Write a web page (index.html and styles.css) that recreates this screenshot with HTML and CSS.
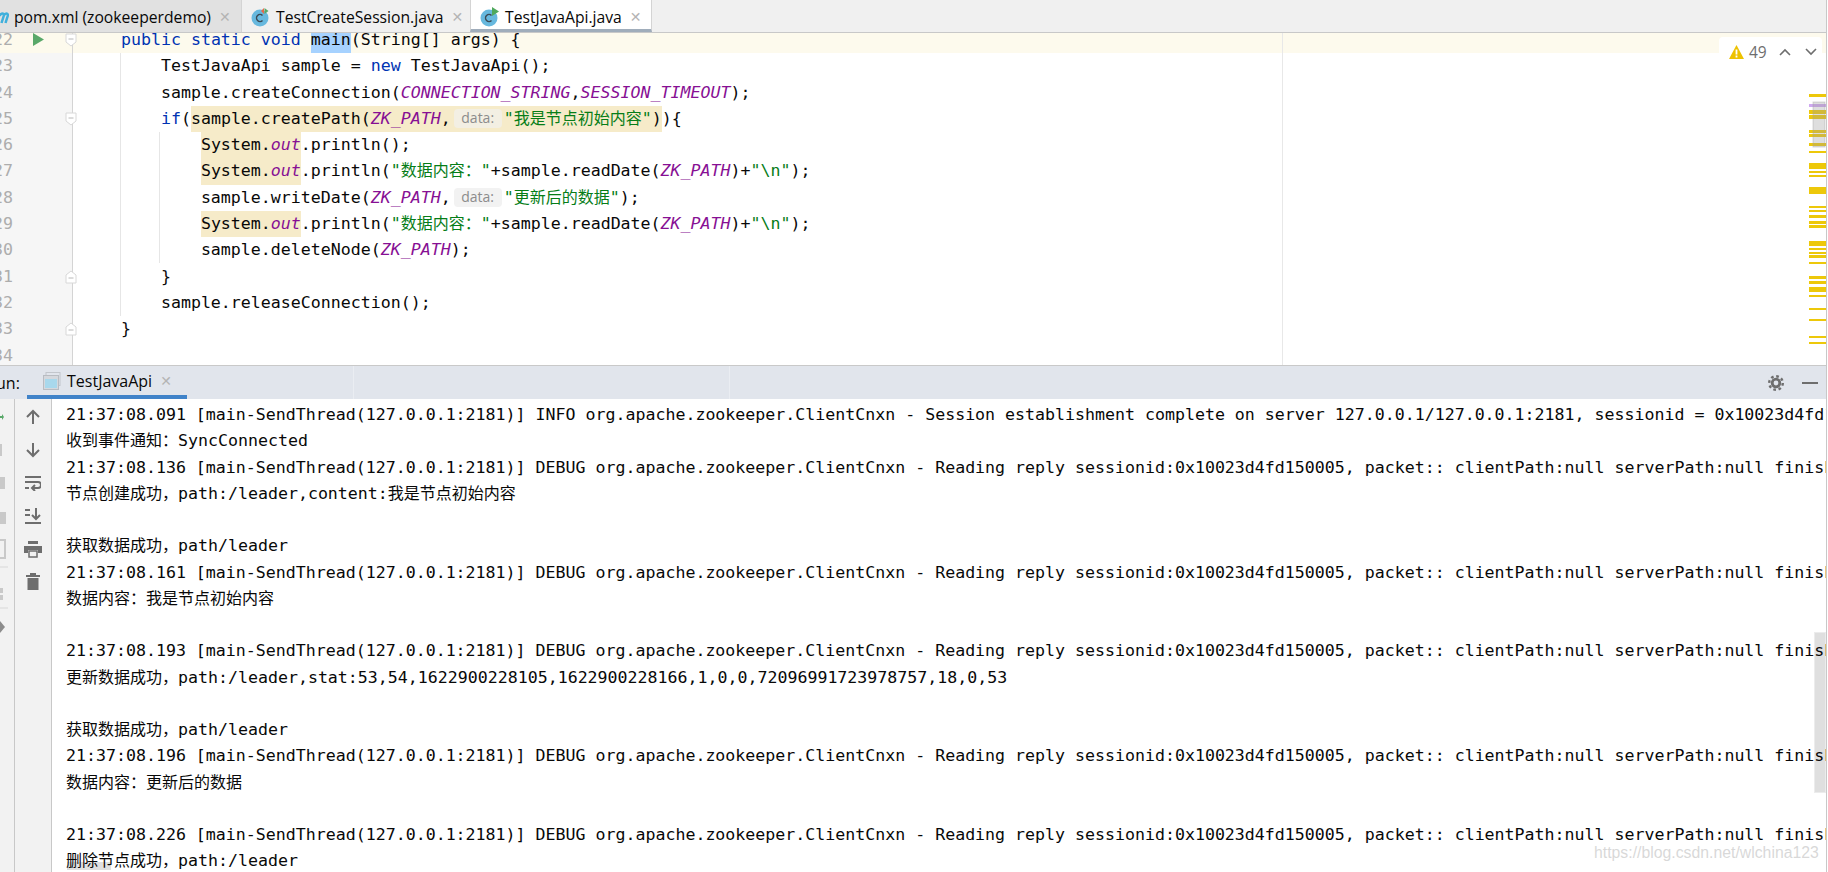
FILE: index.html
```html
<!DOCTYPE html>
<html lang="en">
<head>
    <meta charset="UTF-8">
    <meta name="viewport" content="width=device-width, initial-scale=1.0">
    <title>TestJavaApi.java</title>
    <link rel="stylesheet" href="styles.css">
</head>
<body>
<div class="ide">
    <div class="tabs">
        <div class="tab tab-pom">
            <svg class="tab-icon-m" width="9" height="16" viewBox="0 0 9 16"><path d="M-3 14 L0 4 M0 6 Q3 3 4 6 L1.500 14 M4 6 Q7 3 8 6 L5.500 14" fill="none" stroke="#3fb0dc" stroke-width="2.500"/></svg>
            <span class="tab-name">pom.xml (zookeeperdemo)</span>
            <span class="tab-close">✕</span>
        </div>
        <div class="tab tab-session">
            <svg class="tab-icon" width="20" height="20" viewBox="0 0 20 20"><circle cx="9" cy="11" r="8.500" fill="#67b8de"/><path d="M11.500 8.500a3.500 3.500 0 1 0 0 5" fill="none" stroke="#3c4a55" stroke-width="1.500"/><path d="M13 1v6l-3-3z" fill="#e8684a"/><path d="M13.500 1l4 3-4 3z" fill="#59a869"/></svg>
            <span class="tab-name">TestCreateSession.java</span>
            <span class="tab-close">✕</span>
        </div>
        <div class="tab tab-active">
            <svg class="tab-icon" width="20" height="20" viewBox="0 0 20 20"><circle cx="9" cy="11" r="8.500" fill="#67b8de"/><path d="M11.500 8.500a3.500 3.500 0 1 0 0 5" fill="none" stroke="#3c4a55" stroke-width="1.500"/><path d="M12 0l7 4.500-7 4.500z" fill="#4fa85c"/></svg>
            <span class="tab-name">TestJavaApi.java</span>
            <span class="tab-close">✕</span>
        </div>
    </div>

    <div class="editor">
        <div class="lines">
            <div class="line current">
                <div class="gutter"><span class="num"><span>22</span></span>
                    <svg class="run-arrow" width="11" height="13" viewBox="0 0 11 13"><path d="M0 0l11 6.500-11 6.500z" fill="#59a869"/></svg>
                    <svg class="fold" width="12" height="14" viewBox="0 0 12 14"><path d="M1 1h10v8l-5 4-5-4z" fill="#fff" stroke="#d8d8d8"/><path d="M3.500 6h5" stroke="#b8b8b8"/></svg>
                </div>
                <div class="code">    <span class="kw">public static void</span> <span class="sel">main</span>(String[] args) {</div>
            </div>
            <div class="line">
                <div class="gutter"><span class="num"><span>23</span></span></div>
                <div class="code">        TestJavaApi sample = <span class="kw">new</span> TestJavaApi();</div>
            </div>
            <div class="line">
                <div class="gutter"><span class="num"><span>24</span></span></div>
                <div class="code">        sample.createConnection(<span class="const">CONNECTION_STRING</span>,<span class="const">SESSION_TIMEOUT</span>);</div>
            </div>
            <div class="line">
                <div class="gutter"><span class="num"><span>25</span></span>
                    <svg class="fold" width="12" height="14" viewBox="0 0 12 14"><path d="M1 1h10v8l-5 4-5-4z" fill="#fff" stroke="#d8d8d8"/><path d="M3.500 6h5" stroke="#b8b8b8"/></svg>
                </div>
                <div class="code">        <span class="kw">if</span>(<span class="warn">sample.createPath(<span class="const">ZK_PATH</span>,<span class="hint">data:</span><span class="str">"<span class="cjk">我是节点初始内容</span>"</span>)</span>){</div>
            </div>
            <div class="line">
                <div class="gutter"><span class="num"><span>26</span></span></div>
                <div class="code">            <span class="warn">System.<span class="const">out</span></span>.println();</div>
            </div>
            <div class="line">
                <div class="gutter"><span class="num"><span>27</span></span></div>
                <div class="code">            <span class="warn">System.<span class="const">out</span></span>.println(<span class="str">"<span class="cjk">数据内容：</span>"</span>+sample.readDate(<span class="const">ZK_PATH</span>)+<span class="str">"\n"</span>);</div>
            </div>
            <div class="line">
                <div class="gutter"><span class="num"><span>28</span></span></div>
                <div class="code">            sample.writeDate(<span class="const">ZK_PATH</span>,<span class="hint">data:</span><span class="str">"<span class="cjk">更新后的数据</span>"</span>);</div>
            </div>
            <div class="line">
                <div class="gutter"><span class="num"><span>29</span></span></div>
                <div class="code">            <span class="warn">System.<span class="const">out</span></span>.println(<span class="str">"<span class="cjk">数据内容：</span>"</span>+sample.readDate(<span class="const">ZK_PATH</span>)+<span class="str">"\n"</span>);</div>
            </div>
            <div class="line">
                <div class="gutter"><span class="num"><span>30</span></span></div>
                <div class="code">            sample.deleteNode(<span class="const">ZK_PATH</span>);</div>
            </div>
            <div class="line">
                <div class="gutter"><span class="num"><span>31</span></span>
                    <svg class="fold" width="12" height="14" viewBox="0 0 12 14"><path d="M1 13h10V5L6 1 1 5z" fill="#fff" stroke="#d8d8d8"/><path d="M3.500 8h5" stroke="#b8b8b8"/></svg>
                </div>
                <div class="code">        }</div>
            </div>
            <div class="line">
                <div class="gutter"><span class="num"><span>32</span></span></div>
                <div class="code">        sample.releaseConnection();</div>
            </div>
            <div class="line">
                <div class="gutter"><span class="num"><span>33</span></span>
                    <svg class="fold" width="12" height="14" viewBox="0 0 12 14"><path d="M1 13h10V5L6 1 1 5z" fill="#fff" stroke="#d8d8d8"/><path d="M3.500 8h5" stroke="#b8b8b8"/></svg>
                </div>
                <div class="code">    }</div>
            </div>
            <div class="line">
                <div class="gutter"><span class="num"><span>34</span></span></div>
                <div class="code"></div>
            </div>
        </div>

        <div class="guide guide-outer"></div>
        <div class="guide guide-inner"></div>
        <div class="margin-line"></div>

        <div class="inspections">
            <svg width="15" height="14" viewBox="0 0 15 14"><path d="M7.500 0L15 14H0z" fill="#edc200"/><path d="M7.500 4.500v5M7.500 10.500v2" stroke="#fff" stroke-width="1.800"/></svg>
            <span class="inspect-count">49</span>
            <svg class="chevron" width="12" height="8" viewBox="0 0 12 8"><path d="M1 7l5-5 5 5" fill="none" stroke="#6e6e6e" stroke-width="1.600"/></svg>
            <svg class="chevron" width="12" height="8" viewBox="0 0 12 8"><path d="M1 1l5 5 5-5" fill="none" stroke="#6e6e6e" stroke-width="1.600"/></svg>
        </div>

        <svg class="stripe" width="17" height="332" viewBox="0 33 17 332">
            <g fill="#edc80a">
                <rect y="94" width="17" height="3"/><rect y="110" width="17" height="4"/><rect y="115" width="17" height="4"/>
                <rect y="130" width="17" height="3"/><rect y="134" width="17" height="3"/><rect y="143" width="17" height="3"/>
                <rect y="151" width="17" height="2"/><rect y="163" width="17" height="6"/><rect y="171" width="17" height="2"/>
                <rect y="175" width="17" height="2"/><rect y="187" width="17" height="7"/><rect y="206" width="17" height="2"/>
                <rect y="210" width="17" height="2"/><rect y="215" width="17" height="3"/><rect y="221" width="17" height="3"/>
                <rect y="225" width="17" height="3"/><rect y="241" width="17" height="5"/><rect y="248" width="17" height="2"/>
                <rect y="252" width="17" height="2"/><rect y="255" width="17" height="3"/><rect y="262" width="17" height="2"/>
                <rect y="276" width="17" height="3"/><rect y="281" width="17" height="3"/><rect y="287" width="17" height="5"/>
                <rect y="295" width="17" height="2"/><rect y="308" width="17" height="2"/><rect y="319" width="17" height="2"/>
                <rect y="336" width="17" height="2"/><rect y="342" width="17" height="2"/>
            </g>
            <rect y="104" width="17" height="3" fill="#cfa9f0"/>
            <rect x="4" y="102" width="12" height="45" fill="#9a9a9a" fill-opacity="0.330" stroke="#a0a0a0" stroke-opacity="0.400"/>
        </svg>
    </div>

    <div class="run-header">
        <span class="run-label">un:</span>
        <div class="run-tab">
            <svg width="18" height="18" viewBox="0 0 18 18"><rect x="3" y="0.500" width="14" height="13" fill="none" stroke="#c2c6cc"/><rect x="0.500" y="3.500" width="15" height="14" fill="#d5d8dd" stroke="#b8bcc2"/><rect x="2" y="7" width="12" height="9" fill="#a8d8ec"/></svg>
            <span class="run-tab-name">TestJavaApi</span>
            <span class="tab-close">✕</span>
        </div>
        <div class="run-divider"></div>
        <div class="run-divider run-divider-2"></div>
        <div class="run-actions">
            <svg width="18" height="18" viewBox="0 0 18 18"><circle cx="9" cy="9" r="3.800" fill="none" stroke="#6e6e6e" stroke-width="2.800"/><circle cx="9" cy="9" r="6.800" fill="none" stroke="#6e6e6e" stroke-width="2.400" stroke-dasharray="2.670 2.670"/></svg>
            <svg width="16" height="2" viewBox="0 0 16 2"><rect width="16" height="2" fill="#6e6e6e"/></svg>
        </div>
    </div>

    <div class="run-body">
        <svg class="strip-a" width="14" height="473" viewBox="0 399 14 473">
            <path d="M0 416h2v-2l2 3-2 3v-2H0z" fill="#59a869"/>
            <g fill="#c9c9c9">
                <rect y="444" width="2" height="12"/><rect y="477" width="5" height="12"/><rect y="512" width="6" height="12"/>
                <rect y="588" width="3" height="5"/><rect y="595" width="3" height="5"/>
            </g>
            <path d="M0 540h5v18H0" fill="none" stroke="#c9c9c9" stroke-width="2"/>
            <path d="M0 567h8M0 608h8" stroke="#d8d8d8"/>
            <path d="M0 621l5 6-5 6z" fill="#8c8c8c"/>
        </svg>
        <div class="strip-b">
            <svg width="16" height="16" viewBox="0 0 16 16"><path d="M8 15V2M2 8l6-6 6 6" fill="none" stroke="#6e6e6e" stroke-width="2"/></svg>
            <svg width="16" height="16" viewBox="0 0 16 16"><path d="M8 1v13M2 8l6 6 6-6" fill="none" stroke="#6e6e6e" stroke-width="2"/></svg>
            <svg width="16" height="16" viewBox="0 0 16 16"><path d="M0 2h16M0 7h13a2.500 2.500 0 0 1 0 6H8M0 13h4M10 10l-3 3 3 3" fill="none" stroke="#6e6e6e" stroke-width="2"/></svg>
            <svg width="16" height="16" viewBox="0 0 16 16"><path d="M0 2h5M0 7h5M0 15h16M11 0v10M7 7l4 4 4-4" fill="none" stroke="#6e6e6e" stroke-width="2"/></svg>
            <svg width="18" height="17" viewBox="0 0 18 17"><rect x="4" y="0" width="10" height="3" fill="#6e6e6e"/><path d="M0 5h18v7h-4V9H4v3H0z" fill="#6e6e6e"/><rect x="5" y="10" width="8" height="6" fill="none" stroke="#6e6e6e" stroke-width="1.500"/></svg>
            <svg class="trash" width="14" height="17" viewBox="0 0 14 17"><rect x="0" y="2" width="14" height="2" fill="#6e6e6e"/><rect x="4" y="0" width="6" height="2" fill="#6e6e6e"/><rect x="1.500" y="5" width="11" height="12" fill="#6e6e6e"/></svg>
        </div>
        <div class="console">
            <div class="log">21:37:08.091 [main-SendThread(127.0.0.1:2181)] INFO org.apache.zookeeper.ClientCnxn - Session establishment complete on server 127.0.0.1/127.0.0.1:2181, sessionid = 0x10023d4fd150005, negotiated timeout = 4000</div>
            <div class="log"><span class="cjk">收到事件通知：</span>SyncConnected</div>
            <div class="log">21:37:08.136 [main-SendThread(127.0.0.1:2181)] DEBUG org.apache.zookeeper.ClientCnxn - Reading reply sessionid:0x10023d4fd150005, packet:: clientPath:null serverPath:null finished:false</div>
            <div class="log"><span class="cjk">节点创建成功，</span>path:/leader,content:<span class="cjk">我是节点初始内容</span></div>
            <div class="log"></div>
            <div class="log"><span class="cjk">获取数据成功，</span>path/leader</div>
            <div class="log">21:37:08.161 [main-SendThread(127.0.0.1:2181)] DEBUG org.apache.zookeeper.ClientCnxn - Reading reply sessionid:0x10023d4fd150005, packet:: clientPath:null serverPath:null finished:false</div>
            <div class="log"><span class="cjk">数据内容：我是节点初始内容</span></div>
            <div class="log"></div>
            <div class="log">21:37:08.193 [main-SendThread(127.0.0.1:2181)] DEBUG org.apache.zookeeper.ClientCnxn - Reading reply sessionid:0x10023d4fd150005, packet:: clientPath:null serverPath:null finished:false</div>
            <div class="log"><span class="cjk">更新数据成功，</span>path:/leader,stat:53,54,1622900228105,1622900228166,1,0,0,72096991723978757,18,0,53</div>
            <div class="log"></div>
            <div class="log"><span class="cjk">获取数据成功，</span>path/leader</div>
            <div class="log">21:37:08.196 [main-SendThread(127.0.0.1:2181)] DEBUG org.apache.zookeeper.ClientCnxn - Reading reply sessionid:0x10023d4fd150005, packet:: clientPath:null serverPath:null finished:false</div>
            <div class="log"><span class="cjk">数据内容：更新后的数据</span></div>
            <div class="log"></div>
            <div class="log">21:37:08.226 [main-SendThread(127.0.0.1:2181)] DEBUG org.apache.zookeeper.ClientCnxn - Reading reply sessionid:0x10023d4fd150005, packet:: clientPath:null serverPath:null finished:false</div>
            <div class="log"><span class="cjk">删除节点成功，</span>path:/leader</div>
            <div class="console-thumb"></div>
            <div class="console-popup"></div>
            <div class="watermark">https://blog.csdn.net/wlchina123</div>
        </div>
    </div>
</div>
</body>
</html>
```

FILE: styles.css
```css
html, body {
    margin: 0;
    height: 100%;
    background-color: #fff;
    overflow: hidden;
}

.ide {
    display: flex;
    flex-direction: column;
    box-sizing: border-box;
    width: 1827px;
    height: 100vh;
    border-right: 1px solid #c8c8c8;
    font-family: "DejaVu Sans Mono", "Noto Sans CJK SC", monospace;
    font-size: 16.6px;
    color: #080808;
    overflow: hidden;
}

.cjk {
    font-family: "Noto Sans CJK SC", sans-serif;
    font-size: 16px;
    line-height: 0;
}

/* file tabs */
.tabs {
    display: flex;
    flex: none;
    box-sizing: border-box;
    height: 33px;
    background-color: #f0f0f0;
    border-bottom: 1px solid #c8c8c8;
    font-family: "Open Sans", sans-serif;
    font-size: 15.7px;
}

.tab {
    display: flex;
    align-items: center;
    box-sizing: border-box;
    height: 32px;
    padding-top: 2px;
    overflow: hidden;
}

.tab-pom {
    width: 241px;
    background-color: #e1e1e1;
}

.tab-session {
    width: 229px;
    padding-left: 9px;
    background-color: #f0f0f0;
    border-left: 1px solid #d4d4d4;
}

.tab-active {
    width: 182px;
    padding-left: 9px;
    padding-top: 4px;
    background-color: #fff;
    border-left: 1px solid #d4d4d4;
    border-right: 1px solid #d4d4d4;
    border-bottom: 3px solid #a0adbb;
}

.tab-icon-m {
    flex: none;
    margin-right: 5px;
}

.tab-icon {
    flex: none;
    margin-right: 5px;
}

.tab-name {
    white-space: nowrap;
}

.tab-close {
    margin-left: 8px;
    font-family: "DejaVu Sans", sans-serif;
    font-size: 14px;
    color: #b4b4b4;
}

/* editor */
.editor {
    position: relative;
    flex: none;
    height: 332px;
    overflow: hidden;
}

.lines {
    margin-top: -6px;
}

.line {
    display: flex;
    height: 26.3px;
    line-height: 26.3px;
}

.line.current {
    background-color: #fdfaed;
}

.gutter {
    position: relative;
    display: flex;
    flex: none;
    align-items: center;
    box-sizing: border-box;
    width: 73px;
    background-color: #f6f6f6;
    border-right: 1px solid #d4d4d4;
}

.current .gutter {
    background-color: #fdfaed;
}

.num {
    display: flex;
    justify-content: flex-end;
    width: 13px;
    overflow: hidden;
    color: #adadad;
}

.run-arrow {
    margin-left: 20px;
    margin-top: -2px;
}

.fold {
    position: absolute;
    top: 6px;
    right: -5px;
    z-index: 1;
}

.code {
    flex: 1;
    padding-left: 8px;
    white-space: pre;
}

.kw {
    color: #0033b3;
}

.str {
    color: #067d17;
}

.const {
    color: #871094;
    font-style: italic;
}

.sel {
    display: inline-block;
    background-color: #a6d2ff;
}

.warn {
    display: inline-block;
    background-color: #f6ebc9;
}

.hint {
    display: inline-block;
    width: 48px;
    height: 19px;
    margin: 0 2px 0 3px;
    border-radius: 4px;
    background-color: #f2f2f2;
    font-family: "Open Sans", sans-serif;
    font-size: 14px;
    line-height: 18px;
    text-align: center;
    vertical-align: 1px;
    color: #8c8c8c;
}

.warn .hint {
    background-color: #f3efe3;
}

.guide {
    position: absolute;
    width: 1px;
    background-color: #e6e6e6;
}

.guide-outer {
    left: 120px;
    top: 20px;
    height: 263px;
}

.guide-inner {
    left: 159px;
    top: 99px;
    height: 131px;
}

.margin-line {
    position: absolute;
    left: 1282px;
    top: 0;
    bottom: 0;
    width: 1px;
    background-color: #e8e8e8;
}

.inspections {
    position: absolute;
    top: 4px;
    left: 1719px;
    display: flex;
    align-items: center;
    box-sizing: border-box;
    width: 103px;
    height: 24px;
    padding: 6px 0 0 10px;
    border-radius: 4px 4px 0 0;
    background-color: #fff;
}

.inspect-count {
    margin-left: 5px;
    font-family: "Open Sans", sans-serif;
    font-size: 15.5px;
    color: #6e6e6e;
}

.chevron {
    margin-left: 12px;
}

.chevron + .chevron {
    margin-left: 14px;
}

.stripe {
    position: absolute;
    top: 0;
    right: 0;
}

/* run tool window */
.run-header {
    position: relative;
    display: flex;
    flex: none;
    align-items: center;
    box-sizing: border-box;
    height: 34px;
    background-color: #e1e5ec;
    border-top: 1px solid #c9c9c9;
    font-family: "Open Sans", sans-serif;
    font-size: 16px;
}

.run-label {
    flex: none;
    width: 31px;
    margin-left: -4px;
    white-space: nowrap;
}

.run-tab {
    display: flex;
    align-items: center;
    box-sizing: border-box;
    width: 160px;
    height: 33px;
    padding-left: 16px;
    border-bottom: 4px solid #4083c9;
}

.run-tab-name {
    margin-left: 6px;
}

.run-divider {
    position: absolute;
    left: 353px;
    top: 0;
    bottom: 0;
    width: 1px;
    background-color: #eaedf2;
}

.run-divider-2 {
    left: 729px;
}

.run-actions {
    display: flex;
    align-items: center;
    gap: 17px;
    margin-left: auto;
    padding-right: 8px;
}

.run-body {
    display: flex;
    flex: 1;
    min-height: 0;
}

.strip-a {
    flex: none;
    background-color: #f2f2f2;
    border-right: 1px solid #c8c8c8;
}

.strip-b {
    display: flex;
    flex: none;
    flex-direction: column;
    align-items: center;
    gap: 17px;
    box-sizing: border-box;
    width: 37px;
    padding-top: 10px;
    background-color: #f2f2f2;
    border-right: 1px solid #c8c8c8;
}

.trash {
    margin-top: -2px;
}

.console {
    position: relative;
    flex: 1;
    min-width: 0;
    padding: 3px 0 0 14px;
    overflow: hidden;
}

.log {
    position: relative;
    z-index: 1;
    height: 26.25px;
    line-height: 26.25px;
    white-space: pre;
}

.console-thumb {
    position: absolute;
    top: 233px;
    right: 0;
    box-sizing: border-box;
    width: 12px;
    height: 161px;
    background-color: #dfdfdf;
    border: 1px solid #ececec;
}

.console-popup {
    position: absolute;
    left: 15px;
    top: 463px;
    width: 44px;
    height: 8px;
    background-color: #e0e0e0;
}

.watermark {
    position: absolute;
    z-index: 2;
    top: 443px;
    left: 1542px;
    font-family: "Liberation Sans", sans-serif;
    font-size: 15.8px;
    line-height: 22px;
    color: rgba(190, 190, 190, 0.6);
    white-space: nowrap;
}
```
